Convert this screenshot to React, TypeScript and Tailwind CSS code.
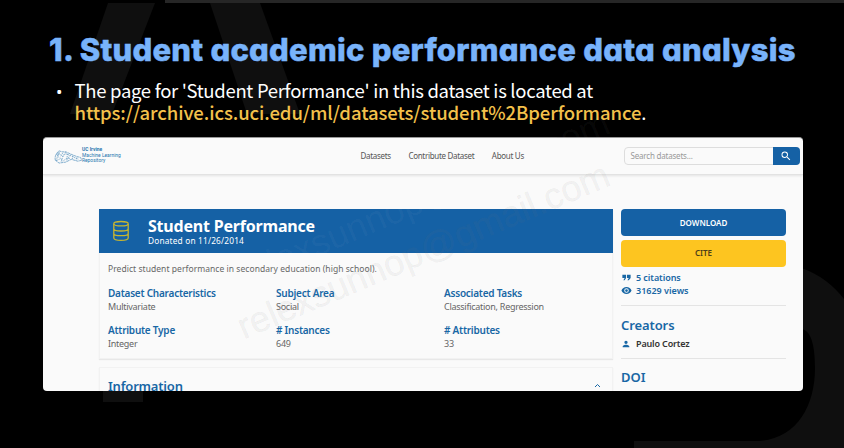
import type { ReactNode } from "react";

function Backdrop() {
  return (
    <svg className="absolute inset-0" width="844" height="448" viewBox="0 0 844 448" aria-hidden="true">
      <g fill="#0f0f0f">
        <path d="M108 3H155L112 114H70Z" />
        <path d="M210 3H260L300 114H247Z" />
        <path d="M103 380H143V402H103Z" />
        <path d="M634 441H755C795 441 815 408 815 368C815 345 811 330 801 329V268C820 274 835 287 844 299V448H634Z" />
      </g>
      <path d="M165 0H844V3H165Z" fill="#262626" />
    </svg>
  );
}

function Logo() {
  return (
    <svg width="28" height="15" viewBox="0 0 29 16" fill="none" stroke="#4a8bbb" strokeWidth=".7" aria-hidden="true">
      <path d="M1 12C0 8 2 4 5 2L8 3L12 3C17 5 22 8 28 9L29 12L25 13L18 11L12 14L5 15Z" strokeDasharray="3 .5" />
      <path d="M2 6L6 5L9 8L12 5L17 7L21 9L26 11M3 12L7 10L9 13L13 10L17 10M5 3L4 9M12 3L9 8L7 14M17 6L14 11M20 7L19 11M24 9L23 12M4 4L2 13M14 5L13 13M9 4L6 9" strokeDasharray="1.5 1" />
    </svg>
  );
}

function DatabaseIcon() {
  return (
    <svg width="18" height="22" viewBox="0 0 18 22" fill="none" stroke="#c9b62f" strokeWidth="1.3" aria-hidden="true">
      <ellipse cx="9" cy="3.7" rx="7.2" ry="2.2" />
      <path d="M1.8 4V18C1.8 19.4 5 20.4 9 20.4S16.2 19.4 16.2 18V4M1.8 8.7C1.8 10 5 11 9 11S16.2 10 16.2 8.7M1.8 13.4C1.8 14.7 5 15.7 9 15.7S16.2 14.7 16.2 13.4" />
    </svg>
  );
}

function SolidIcon({ d, className }: { d: string; className: string }) {
  return (
    <svg viewBox="0 0 24 24" className={className} fill="currentColor" aria-hidden="true">
      <path d={d} />
    </svg>
  );
}

const SEARCH = "M15.5 14h-.79l-.28-.27A6.47 6.47 0 0 0 16 9.5 6.5 6.5 0 1 0 9.5 16c1.61 0 3.09-.59 4.23-1.57l.27.28v.79l5 4.99L20.49 19l-4.99-5zm-6 0C7.01 14 5 11.99 5 9.5S7.01 5 9.5 5 14 7.01 14 9.5 11.99 14 9.5 14z";
const QUOTE = "M5 18h3l3-5V6H3v7h5zm9 0h3l4-5V6h-8v7h4z";
const EYE = "M12 4.5C7 4.5 2.73 7.61 1 12c1.73 4.39 6 7.5 11 7.5s9.27-3.11 11-7.5c-1.73-4.39-6-7.5-11-7.5zM12 17a5 5 0 1 1 0-10 5 5 0 0 1 0 10zm0-8a3 3 0 1 0 0 6 3 3 0 0 0 0-6z";
const PERSON = "M12 12a4 4 0 1 0 0-8 4 4 0 0 0 0 8zm0 2c-2.67 0-8 1.34-8 4v2h16v-2c0-2.66-5.33-4-8-4z";

function Field({ label, value }: { label: string; value: string }) {
  return (
    <div className="h-[37px] whitespace-nowrap">
      <div className="text-[10px] leading-[14px] font-semibold tracking-[-0.23px] text-[#1867a5]">{label}</div>
      <div className="text-[9px] leading-[13px] tracking-[-0.27px] text-[#666]">{value}</div>
    </div>
  );
}

function Card({ children, className }: { children: ReactNode; className: string }) {
  return <section className={`border border-[#f2f2f2] shadow-[0_1px_1px_#e8e8e8] ${className}`}>{children}</section>;
}

export default function App() {
  return (
    <main className="relative h-[448px] w-[844px] overflow-hidden bg-black font-['Noto_Sans','Open_Sans',sans-serif]">
      <Backdrop />
      <div className="relative flex h-full flex-col">
        <h1 className="mt-[28px] ml-[49px] h-[43px] whitespace-nowrap font-[Inter,sans-serif] text-[31px] leading-[43px] font-extrabold tracking-[0.24px] text-[#78b3fb] [-webkit-text-stroke:0.5px_#78b3fb] [font-feature-settings:'cv11','ss03']">
          1. Student academic performance data analysis
        </h1>
        <div className="mt-[9px] ml-[56px] flex h-[44px] font-['Noto_Sans_CJK_SC',sans-serif] text-[18.5px] leading-[21.5px] text-white">
          <span className="w-[18.5px] pt-px font-['Noto_Sans',sans-serif] text-[17px]">•</span>
          <p className="whitespace-nowrap">
            <span className="tracking-[-0.3px]">The page for 'Student Performance' in this dataset is located at</span>
            <br />
            <span className="font-medium tracking-[-0.08px] text-[#f3c14b]">https://archive.ics.uci.edu/ml/datasets/student%2Bperformance</span>.
          </p>
        </div>
        <div className="mt-[13px] ml-[43px] h-[254px] w-[760px] overflow-hidden rounded-[4px] border-t border-[#999] bg-[#fafafa]">
          <header className="flex h-[37px] items-center border-b border-[#e2e2e2] pl-[11px] shadow-[0_1px_2px_#e4e4e4]">
            <Logo />
            <div className="w-[278.5px] pb-px font-[Roboto,sans-serif] text-[4.9px] leading-[5.7px] text-[#2676af]">
              <b>UC Irvine</b><br />Machine Learning<br />Repository
            </div>
            <nav className="flex w-[263px] gap-[17.5px] whitespace-nowrap text-[8px] tracking-[-0.3px] text-[#555]">
              <span>Datasets</span>
              <span>Contribute Dataset</span>
              <span>About Us</span>
            </nav>
            <div className="flex h-[18px] w-[176px] rounded-[4px] border border-[#ddd]">
              <span className="grow pl-[6px] text-[8px] leading-[16px] tracking-[-0.2px] text-[#999]">Search datasets...</span>
              <span className="-my-px -mr-px flex w-[27px] items-center justify-center rounded-r-[4px] bg-[#1561a5] text-white">
                <SolidIcon d={SEARCH} className="h-[12px] w-[12px]" />
              </span>
            </div>
          </header>
          <div className="flex pt-[34px] pl-[56px]">
            <div className="w-[514px]">
              <Card className="h-[150px]">
                <div className="-mt-px -mr-px -ml-px flex h-[44px] items-center bg-[#1561a5] pl-[13px] text-white">
                  <DatabaseIcon />
                  <div className="ml-[18px] pt-px">
                    <div className="text-[16px] leading-[18px] font-bold tracking-[-0.2px]">Student Performance</div>
                    <div className="text-[8.3px] leading-[12px] tracking-[0.18px]">Donated on 11/26/2014</div>
                  </div>
                </div>
                <p className="mt-[9px] ml-[8px] text-[8.5px] leading-[13px] tracking-[0.05px] text-[#666]">
                  Predict student performance in secondary education (high school).
                </p>
                <div className="mt-[11px] ml-[8px] grid grid-cols-[168px_168px_150px]">
                  <Field label="Dataset Characteristics" value="Multivariate" />
                  <Field label="Subject Area" value="Social" />
                  <Field label="Associated Tasks" value="Classification, Regression" />
                  <Field label="Attribute Type" value="Integer" />
                  <Field label="# Instances" value="649" />
                  <Field label="# Attributes" value="33" />
                </div>
              </Card>
              <Card className="mt-[8px] flex h-[40px] justify-between pt-[9px] pr-[11px] pl-[8px] text-[#1867a5]">
                <h2 className="text-[13px] leading-[18px] font-semibold tracking-[-0.2px]">Information</h2>
                <svg className="mt-[6px]" width="7" height="5" viewBox="0 0 7 5" fill="none" stroke="currentColor" aria-hidden="true"><path d="M1 4L3.5 1.5L6 4" /></svg>
              </Card>
            </div>
            <aside className="ml-[8px] w-[165px] text-[#1867a5]">
              <div className="flex h-[27px] items-center justify-center rounded-[4px] bg-[#1561a5] text-[8px] font-semibold text-white">DOWNLOAD</div>
              <div className="mt-[3.5px] flex h-[27px] items-center justify-center rounded-[4px] bg-[#fdc520] text-[8px] font-semibold text-[#4d3e18]">CITE</div>
              <div className="mt-[4.5px] flex h-[13px] items-center gap-[4px] text-[9px] font-semibold tracking-[-0.06px]"><SolidIcon d={QUOTE} className="h-[11px] w-[11px]" /><span>5 citations</span></div>
              <div className="flex h-[13px] items-center gap-[4px] text-[9px] font-semibold"><SolidIcon d={EYE} className="h-[11px] w-[11px]" /><span>31629 views</span></div>
              <div className="mt-[8px] border-t border-[#e4e4e4]" />
              <h2 className="mt-[10px] text-[13px] leading-[18px] font-semibold tracking-[-0.1px]">Creators</h2>
              <div className="mt-[3px] flex h-[13px] items-center gap-[5px] text-[9px] font-semibold tracking-[-0.15px]"><SolidIcon d={PERSON} className="h-[10px] w-[10px]" /><span className="text-[#333]">Paulo Cortez</span></div>
              <div className="mt-[8px] border-t border-[#e4e4e4]" />
              <h2 className="mt-[9px] text-[13px] leading-[18px] font-semibold">DOI</h2>
            </aside>
          </div>
        </div>
      </div>
      <div className="absolute top-[309px] left-[246px] origin-bottom-left -rotate-[22.8deg] whitespace-nowrap font-['Liberation_Sans',sans-serif] text-[36.3px] leading-[36px] text-[#777]/8 [-webkit-text-stroke:0.5px_#77777714]">relexsunnop@gmail.com</div>
      <div className="absolute top-[257px] left-[246px] origin-bottom-left -rotate-[22.8deg] whitespace-nowrap font-['Liberation_Sans',sans-serif] text-[36.3px] leading-[36px] text-white/4">relexsunnop@gmail.com</div>
    </main>
  );
}
